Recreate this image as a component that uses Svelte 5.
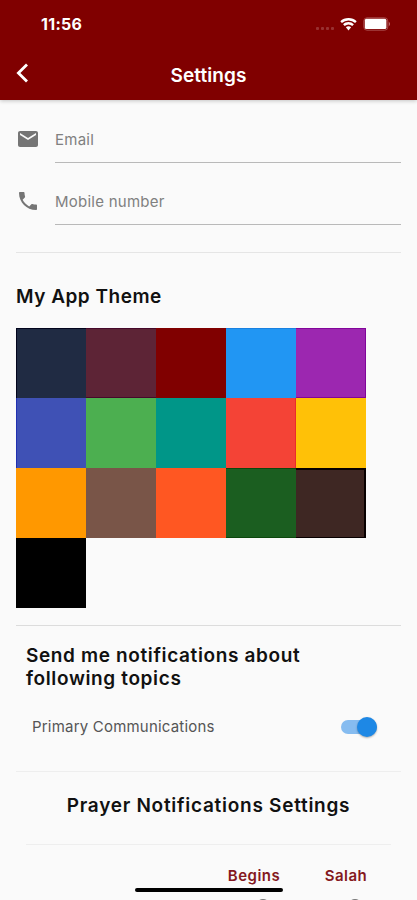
<script lang="ts">
	const swatches = [
		{ fill: '#202b43', edge: '#02041c', sides: '1px 0 0 1px' },
		{ fill: '#5d2436', edge: '#45082a', sides: '1px 0 1px 0' },
		{ fill: '#800000', edge: '#780000', sides: '0' },
		{ fill: '#2196f3', edge: '#1880e0', sides: '1px 0 0 0' },
		{ fill: '#9c27b0', edge: '#82059a', sides: '1px 1px 1px 0' },
		{ fill: '#3f51b5', edge: '#2030b0', sides: '0 0 0 1px' },
		{ fill: '#4caf50', edge: '#4caf50', sides: '0' },
		{ fill: '#009688', edge: '#009688', sides: '0' },
		{ fill: '#f44336', edge: '#e92c2c', sides: '0 1px 0 0' },
		{ fill: '#ffc107', edge: '#ffc107', sides: '0' },
		{ fill: '#ff9800', edge: '#ff9800', sides: '0' },
		{ fill: '#795548', edge: '#795548', sides: '0' },
		{ fill: '#ff5722', edge: '#ff5722', sides: '0' },
		{ fill: '#1b5e20', edge: '#0c480c', sides: '1px 0 1px 0' },
		{ fill: '#3e2723', edge: '#080000', sides: '2px 2px 1px 0' },
		{ fill: '#000000', edge: '#000000', sides: '0' }
	];

	let selected = $state(2);
	let primaryOn = $state(true);
</script>

<div class="screen">
	<header>
		<div class="status">
			<span class="time">11:56</span>
			<div class="indicators">
				<span class="signal"><i></i><i></i><i></i><i></i></span>
				<svg class="wifi" width="17" height="13" viewBox="0 0 17 13" fill="#fff">
					<path d="M8.5 0C5.3 0 2.4 1.2.3 3.2l1.6 1.9a9.7 9.7 0 0 1 13.2 0l1.6-1.9A11.9 11.9 0 0 0 8.5 0z" />
					<path d="M8.5 4.1c-2.1 0-4 .8-5.4 2.1l1.6 1.9a5.8 5.8 0 0 1 7.6 0l1.6-1.9a8 8 0 0 0-5.4-2.1z" />
					<path d="M8.5 8.2c-1 0-2 .4-2.6 1l2.6 3.2 2.6-3.2c-.7-.6-1.6-1-2.6-1z" />
				</svg>
				<svg class="battery" width="28" height="14" viewBox="0 0 28 14">
					<rect x=".8" y=".8" width="24" height="12.4" rx="3.2" fill="none" stroke="#a84a4a" />
					<rect x="1.8" y="1.8" width="21.6" height="10.2" rx="1.6" fill="#fff" />
					<path d="M25.8 4.8c1.6.7 1.6 3.7 0 4.4z" fill="#c07070" />
				</svg>
			</div>
		</div>
		<div class="bar">
			<button class="back" aria-label="Back">
				<svg width="14" height="22" viewBox="0 0 14 22" fill="none" stroke="#fff" stroke-width="2.8">
					<path d="M12 2.4 3.4 11 12 19.6" />
				</svg>
			</button>
			<h1>Settings</h1>
		</div>
	</header>

	<main>
		<div class="field">
			<svg width="24" height="24" viewBox="0 0 24 24" fill="#757575">
				<path d="M20 4H4c-1.1 0-1.99.9-1.99 2L2 18c0 1.1.9 2 2 2h16c1.1 0 2-.9 2-2V6c0-1.1-.9-2-2-2zm0 4l-8 5-8-5V6l8 5 8-5v2z" />
			</svg>
			<span class="input">Email</span>
		</div>
		<div class="field">
			<svg width="24" height="24" viewBox="0 0 24 24" fill="#757575">
				<path d="M6.62 10.79c1.44 2.83 3.76 5.14 6.59 6.59l2.2-2.2c.27-.27.67-.36 1.02-.24 1.12.37 2.33.57 3.57.57.55 0 1 .45 1 1V20c0 .55-.45 1-1 1-9.39 0-17-7.61-17-17 0-.55.45-1 1-1h3.5c.55 0 1 .45 1 1 0 1.25.2 2.45.57 3.57.11.35.03.74-.25 1.02l-2.2 2.2z" />
			</svg>
			<span class="input">Mobile number</span>
		</div>

		<section class="theme">
			<h2>My App Theme</h2>
			<div class="swatches">
				{#each swatches as swatch, i}
					<button
						class="swatch"
						aria-label="Theme {i + 1}"
						aria-pressed={selected === i}
						style="background: {swatch.fill}; border-color: {swatch.edge}; border-width: {swatch.sides}"
						onclick={() => (selected = i)}
					></button>
				{/each}
			</div>
		</section>

		<section class="topics">
			<h2>Send me notifications about<br />following topics</h2>
			<div class="topic">
				<span>Primary Communications</span>
				<button
					class="toggle"
					class:on={primaryOn}
					role="switch"
					aria-checked={primaryOn}
					aria-label="Primary Communications"
					onclick={() => (primaryOn = !primaryOn)}
				>
					<span class="knob"></span>
				</button>
			</div>
		</section>

		<section class="prayer">
			<h2>Prayer Notifications Settings</h2>
			<div class="columns">
				<div class="column">
					<span class="begins">Begins</span>
					<span class="dot"></span>
				</div>
				<div class="column">
					<span class="salah">Salah</span>
					<span class="dot"></span>
				</div>
			</div>
		</section>
	</main>

	<div class="home"></div>
</div>

<style>
	:global(body) {
		background: #fafafa;
	}

	.screen {
		position: relative;
		width: 417px;
		height: 900px;
		overflow: hidden;
		background: #fafafa;
		font-family: Inter, 'Liberation Sans', sans-serif;
		color: #111;
	}

	button {
		display: block;
		padding: 0;
		border: 0;
		background: none;
		cursor: pointer;
	}

	h1,
	h2 {
		margin: 0;
		font-weight: 600;
	}

	header {
		height: 100px;
		background: #800000;
		color: #fff;
		box-shadow: 0 1px 4px rgba(0, 0, 0, 0.22);
	}

	.status {
		display: flex;
		justify-content: space-between;
		align-items: center;
		height: 48px;
		padding: 0 26px 0 41px;
	}

	.time {
		font-size: 16px;
		font-weight: 700;
		letter-spacing: 0.3px;
	}

	.indicators {
		display: flex;
		align-items: center;
	}

	.signal {
		display: flex;
		gap: 2px;
		margin: 9px 6px 0 0;
	}

	.signal i {
		width: 3px;
		height: 3px;
		border-radius: 1px;
		background: #993030;
	}

	.wifi {
		margin-right: 6px;
	}

	.bar {
		display: grid;
		grid-template-columns: 56px 1fr 56px;
		align-items: center;
		height: 52px;
	}

	.back {
		padding: 0 0 3px 15px;
	}

	.back svg {
		display: block;
	}

	h1 {
		padding-top: 3px;
		text-align: center;
		font-size: 19px;
		line-height: 24px;
		letter-spacing: 0.1px;
	}

	main {
		padding: 15px 16px 0;
	}

	.field {
		display: flex;
		height: 62px;
	}

	.field svg {
		margin: 12px 15px 0 0;
	}

	.input {
		flex: 1;
		height: 47px;
		border-bottom: 1px solid #b9b9b9;
		font-size: 15px;
		line-height: 50px;
		letter-spacing: 0.25px;
		color: #808080;
	}

	.theme {
		height: 372px;
		margin-top: 13px;
		border-top: 1px solid #e5e5e5;
	}

	.theme h2 {
		padding: 32px 0 19px;
		font-size: 19px;
		line-height: 24px;
		letter-spacing: 0.5px;
	}

	.swatches {
		display: grid;
		grid-template-columns: repeat(5, 70px);
		grid-auto-rows: 70px;
	}

	.swatch {
		border-style: solid;
	}

	.topics {
		height: 145px;
		border-top: 1px solid #dcdcdc;
	}

	.topics h2 {
		padding: 18px 10px 0;
		font-size: 19px;
		line-height: 23px;
		letter-spacing: 0.63px;
	}

	.topic {
		display: flex;
		justify-content: space-between;
		align-items: center;
		margin-top: 22px;
		padding: 0 24px 0 16px;
		font-size: 15px;
		line-height: 30px;
		letter-spacing: 0.2px;
		color: #555;
	}

	.toggle {
		display: flex;
		align-items: center;
		width: 36px;
		height: 14px;
		border-radius: 7px;
		background: #c4c4c4;
	}

	.toggle.on {
		justify-content: flex-end;
		background: #86bcf0;
	}

	.knob {
		width: 20px;
		height: 20px;
		flex-shrink: 0;
		border-radius: 50%;
		background: #fff;
		box-shadow: 0 1px 2px rgba(0, 0, 0, 0.3);
	}

	.on .knob {
		background: #1e88e5;
	}

	.prayer {
		border-top: 1px solid #eee;
	}

	.prayer h2 {
		height: 73px;
		margin: 0 10px;
		border-bottom: 1px solid #eee;
		box-sizing: border-box;
		text-align: center;
		font-size: 19px;
		line-height: 68px;
		letter-spacing: 0.73px;
		white-space: nowrap;
	}

	.columns {
		display: grid;
		grid-template-columns: 92px 92px;
		justify-content: end;
		padding-right: 9px;
	}

	.column {
		display: flex;
		flex-direction: column;
		align-items: center;
		padding-top: 20px;
		font-size: 15px;
		font-weight: 600;
		line-height: 22px;
		letter-spacing: 0.5px;
		color: #841820;
	}

	.dot {
		width: 14px;
		height: 14px;
		margin: 12px 0 0 18px;
		border-radius: 50%;
		background: #777;
	}

	.home {
		position: absolute;
		left: 135px;
		bottom: 8px;
		width: 148px;
		height: 4px;
		border-radius: 2px;
		background: #000;
	}
</style>
